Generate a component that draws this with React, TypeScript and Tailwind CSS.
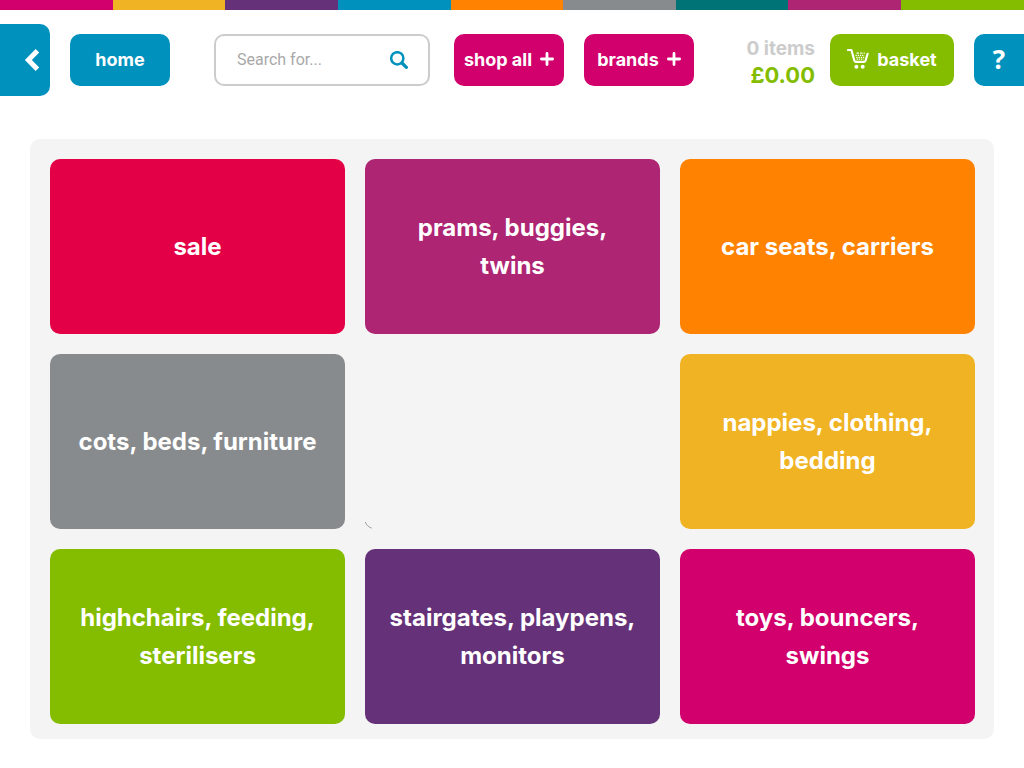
import React from "react";

const stripes = [
  "bg-[#d1006c]",
  "bg-[#f0b323]",
  "bg-[#653279]",
  "bg-[#0092bd]",
  "bg-[#ff8300]",
  "bg-[#888b8d]",
  "bg-[#007377]",
  "bg-[#ae2573]",
  "bg-[#84bd00]",
];

const categories = [
  { label: "sale", color: "bg-[#e40046]" },
  { label: "prams, buggies, twins", color: "bg-[#ae2573]" },
  { label: "car seats, carriers", color: "bg-[#ff8300]" },
  { label: "cots, beds, furniture", color: "bg-[#888b8d]" },
  null,
  { label: "nappies, clothing, bedding", color: "bg-[#f0b323]" },
  { label: "highchairs, feeding, sterilisers", color: "bg-[#84bd00]" },
  { label: "stairgates, playpens, monitors", color: "bg-[#653279]" },
  { label: "toys, bouncers, swings", color: "bg-[#d1006c]" },
];

function PlusIcon() {
  return (
    <svg width="14" height="14" viewBox="0 0 14 14" fill="none" stroke="#fff" strokeWidth="2.8" strokeLinecap="round" aria-hidden="true">
      <path d="M7 1.4v11.2M1.4 7h11.2" />
    </svg>
  );
}

function CartIcon() {
  return (
    <svg width="22" height="22" viewBox="0 0 22 22" fill="none" aria-hidden="true">
      <path d="M1 2h3.4l3 10.8q.3 1 1.2 1h8.6q1 0 1.3-1L20.6 5.8" stroke="#fff" strokeWidth="2.2" strokeLinecap="round" strokeLinejoin="round" />
      <path d="M8.5 7.3h9M9.3 9.3h8M9.6 11.2h7" stroke="#fff" strokeWidth="1.2" strokeDasharray="1.3 .9" />
      <path d="M9.5 5.2h2.4M13.2 5.2h2.2M16.6 5.2h1.2" stroke="#fff" strokeWidth="1.2" />
      <circle cx="9.4" cy="18.8" r="2" fill="#fff" />
      <circle cx="15.7" cy="18.8" r="2" fill="#fff" />
    </svg>
  );
}

export default function App() {
  return (
    <div className="overflow-hidden bg-white font-['Inter',sans-serif] font-bold">
      <div className="grid h-2.5 grid-cols-[repeat(8,11%)_1fr]">
        {stripes.map((c) => (
          <div key={c} className={c} />
        ))}
      </div>

      <header className="mt-3.5 flex h-18 items-center text-[18px] text-white">
        <button type="button" aria-label="Back" className="flex h-18 w-[50px] items-center justify-end rounded-r-[10px] bg-[#0092bd] pr-2.5">
          <svg width="16" height="24" viewBox="0 0 16 24" fill="none" stroke="#fff" strokeWidth="5" aria-hidden="true">
            <path d="M13.4 2.8L4.4 12l9 9.2" />
          </svg>
        </button>
        <a href="#home" className="ml-5 flex h-13 w-[100px] items-center justify-center rounded-[10px] bg-[#0092bd] pb-0.5">
          home
        </a>
        <form role="search" className="ml-11 flex h-13 min-w-0 flex-1 items-center rounded-[10px] border-2 border-[#ccc] pr-5 pl-[21px]">
          <input
            type="text"
            aria-label="Search for"
            placeholder="Search for..."
            className="min-w-0 flex-1 bg-transparent font-['Roboto',sans-serif] text-[16px] font-normal text-[#333] outline-none placeholder:text-[#a9a9a9]"
          />
          <button type="button" aria-label="Search">
            <svg width="18" height="18" viewBox="0 0 18 18" fill="none" stroke="#0092bd" aria-hidden="true">
              <circle cx="7.3" cy="7.3" r="6.1" strokeWidth="2.5" />
              <path d="M12 12l4.4 4.4" strokeWidth="3.2" strokeLinecap="round" />
            </svg>
          </button>
        </form>
        <button type="button" className="ml-6 flex h-13 w-[110px] items-center justify-center gap-2 rounded-[10px] bg-[#d1006c] pb-0.5">
          shop all <PlusIcon />
        </button>
        <button type="button" className="ml-5 flex h-13 w-[110px] items-center justify-center gap-2 rounded-[10px] bg-[#d1006c] pb-0.5">
          brands <PlusIcon />
        </button>
        <div className="ml-5 w-[101px] pt-[3px] text-right leading-[27px]">
          <div className="text-[19px] text-[#ccc]">0 items</div>
          <div className="text-[22px] text-[#84bd00]">£0.00</div>
        </div>
        <a href="#basket" className="ml-[15px] flex h-13 w-[124px] items-center justify-center gap-2 rounded-[10px] bg-[#84bd00] pb-0.5">
          <CartIcon /> basket
        </a>
        <button type="button" aria-label="Help" className="ml-5 h-13 w-[50px] rounded-l-[10px] bg-[#0092bd] pb-0.5 font-['Open_Sans',sans-serif] text-[26px]">
          ?
        </button>
      </header>

      <main className="mx-[30px] mt-[43px] mb-[29px] rounded-[10px] bg-[#f4f4f4] pt-5 pr-[19px] pb-[15px] pl-5">
        <nav aria-label="Categories" className="grid grid-cols-3 gap-5">
          {categories.map((item, i) =>
            item ? (
              <a
                key={item.label}
                href="#category"
                className={`flex h-[175px] items-center justify-center rounded-[10px] px-5 text-center text-[24px] leading-[38px] text-white ${item.color}`}
              >
                {item.label}
              </a>
            ) : (
              <div key={i} className="flex h-[175px] items-end">
                <svg width="10" height="10" viewBox="0 0 10 10" fill="none" stroke="#888b8d" strokeWidth="0.8" aria-hidden="true">
                  <path d="M0.3 3Q1.5 7.2 6.8 9.2" />
                </svg>
              </div>
            ),
          )}
        </nav>
      </main>
    </div>
  );
}
